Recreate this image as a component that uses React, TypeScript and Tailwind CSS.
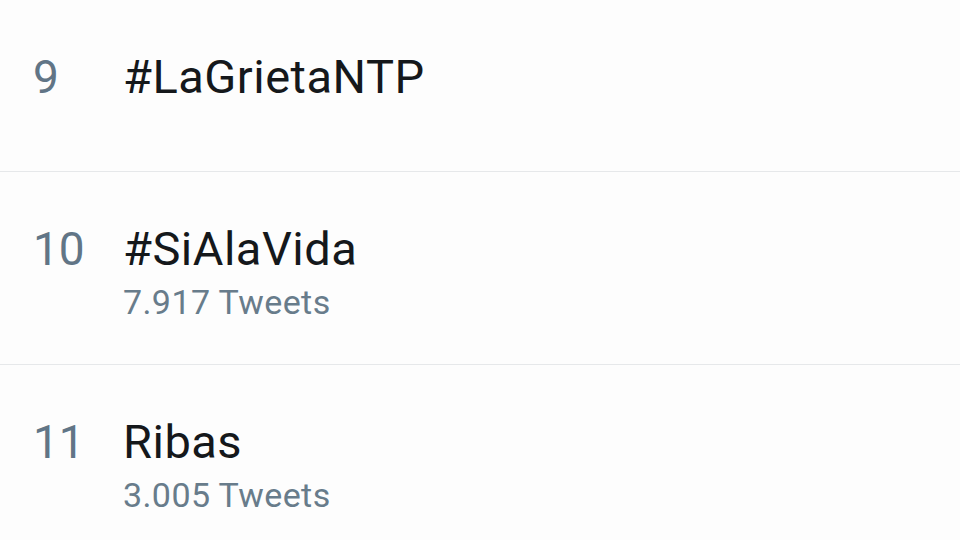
import React from 'react';

interface Trend {
    rank: number;
    name: string;
    tweets?: string;
}

const TRENDS: Trend[] = [
    { rank: 9, name: '#LaGrietaNTP' },
    { rank: 10, name: '#SiAlaVida', tweets: '7.917 Tweets' },
    { rank: 11, name: 'Ribas', tweets: '3.005 Tweets' },
];

const TrendRow: React.FC<{ trend: Trend; first: boolean }> = ({ trend, first }) => {
    return (
        <div
            className={`flex pl-[33px] pt-[50px] ${first ? 'h-[171px]' : 'h-[193px] border-t border-[#e6e8ea]'}`}
        >
            <div className="w-[90px] shrink-0 text-[46px] leading-[54px] text-[#617586]">{trend.rank}</div>
            <div className="flex flex-col">
                <div className="text-[47px] leading-[54px] tracking-[0.5px] text-[#15181b]">{trend.name}</div>
                {trend.tweets && (
                    <div className="mt-[6px] text-[34px] leading-[40px] tracking-[0.4px] text-[#687c8b]">{trend.tweets}</div>
                )}
            </div>
        </div>
    );
};

export default function App() {
    return (
        <div className="w-[960px] h-[540px] overflow-hidden bg-[#fdfdfd] font-['Roboto',sans-serif]">
            {TRENDS.map((t, i) => (
                <TrendRow key={t.rank} trend={t} first={i === 0} />
            ))}
        </div>
    );
}
